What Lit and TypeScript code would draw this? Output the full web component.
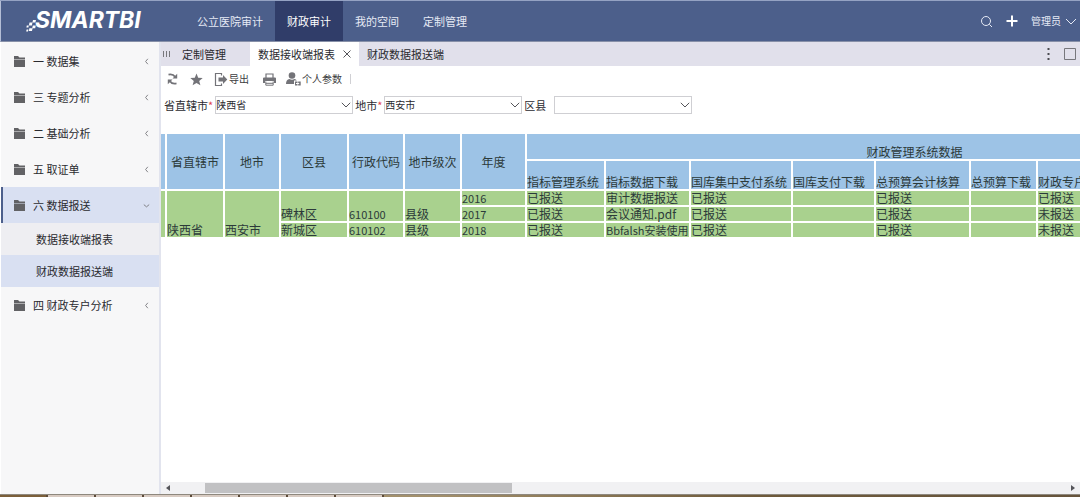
import { LitElement, html, css, svg, nothing } from "lit";
import { customElement, state } from "lit/decorators.js";
import { classMap } from "lit/directives/class-map.js";

const NAV = ["公立医院审计", "财政审计", "我的空间", "定制管理"];

const MENU: { label: string; children?: string[] }[] = [
  { label: "一 数据集" },
  { label: "三 专题分析" },
  { label: "二 基础分析" },
  { label: "五 取证单" },
  { label: "六 数据报送", children: ["数据接收端报表", "财政数据报送端"] },
  { label: "四 财政专户分析" },
];

const FILTERS = [
  { id: "province", label: "省直辖市", required: true, value: "陕西省" },
  { id: "city", label: "地市", required: true, value: "西安市" },
  { id: "district", label: "区县", required: false, value: "" },
];

const COLUMNS = [6, 58, 56, 68, 56, 57, 65, 79, 85, 102, 83, 95, 67, 266];
const KEYS = ["省直辖市", "地市", "区县", "行政代码", "地市级次", "年度"];
const SYSTEMS = ["指标管理系统", "指标数据下载", "国库集中支付系统", "国库支付下载", "总预算会计核算", "总预算下载", "财政专户"];

type Cell = { text: string; rows: number };
const c = (text: string, rows = 1): Cell => ({ text, rows });
const ROWS: Cell[][] = [
  [c("", 3), c("陕西省", 3), c("西安市", 3), c("碑林区", 2), c("610100", 2), c("县级", 2), c("2016"),
    c("已报送"), c("审计数据报送"), c("已报送"), c(""), c("已报送"), c(""), c("已报送")],
  [c("2017"), c("已报送"), c("会议通知.pdf"), c("已报送"), c(""), c("已报送"), c(""), c("未报送")],
  [c("新城区"), c("610102"), c("县级"), c("2018"),
    c("已报送"), c("Bbfalsh安装使用"), c("已报送"), c(""), c("已报送"), c(""), c("未报送")],
];

const chevron = (d: string, size = 10) => html`
  <svg class="chevron" width=${size} height=${size} viewBox="0 0 10 10" fill="none" stroke="currentColor" aria-hidden="true">
    ${svg`<path d=${d} />`}
  </svg>`;

@customElement("app-root")
export class AppRoot extends LitElement {
  @state() private nav = 1;
  @state() private open = 4;

  static styles = css`
    :host {
      display: flex;
      flex-direction: column;
      height: 100vh;
      box-sizing: border-box;
      overflow: hidden;
      border-top: 1px solid #94a2c3;
      background: #fff;
      color: #2a2a2f;
      font-family: "Noto Sans CJK SC", sans-serif;
      font-size: 11px;
      line-height: 16px;
    }
    * { box-sizing: border-box; }
    button {
      display: flex;
      align-items: center;
      margin: 0;
      padding: 0;
      border: 0;
      background: none;
      color: inherit;
      font: inherit;
      white-space: nowrap;
      cursor: pointer;
    }
    svg { display: block; flex: none; }

    .header {
      display: flex;
      flex: none;
      height: 41px;
      background: #4c5f8b;
      border-left: 1px solid #b4bed6;
      border-bottom: 1px solid #8790a8;
      color: #e6eaf5;
    }
    .brand {
      display: flex;
      align-items: center;
      width: 184px;
      padding-left: 25px;
      color: #fff;
    }
    .brand .mark { margin: 10px -2px 0 0; }
    .brand b {
      font: italic 700 23px/30px Inter, sans-serif;
      padding-bottom: 2px;
    }
    .nav { display: flex; flex: 1; }
    .nav button { padding: 0 12px; }
    .nav button.active { background: #303d69; color: #fff; }
    .user { display: flex; align-items: center; gap: 13px; padding-right: 4px; }
    .user .name { gap: 5px; font-size: 10px; }

    .body { display: flex; flex: 1; min-height: 0; }
    .side {
      flex: none;
      width: 161px;
      padding-top: 1px;
      background: #f7f7f8;
      border-left: 1px solid #fff;
      border-right: 2px solid #e2e4ee;
    }
    .item {
      width: 100%;
      height: 36px;
      padding: 0 8px 0 10px;
      gap: 7px;
      border-left: 2px solid transparent;
      text-align: left;
    }
    .item span { flex: 1; }
    .item .chevron { color: #77777c; }
    .item.open { background: #d9e0f2; border-left-color: #4c5f8b; }
    .sub { display: flex; flex-direction: column; background: #eeeef2; }
    .sub a {
      padding: 8px 0 8px 35px;
      color: inherit;
      text-decoration: none;
    }
    .sub a.current { background: #d9e0f2; }

    .main { display: flex; flex: 1; flex-direction: column; min-width: 0; }
    .tabs {
      display: flex;
      flex: none;
      height: 24px;
      background: #e1e0eb;
    }
    .grip { display: flex; align-items: center; width: 13px; padding-left: 2px; }
    .tabs .tab { padding: 0 8px; }
    .tabs .first { width: 76px; }
    .tabs .active { display: flex; align-items: center; width: 109px; background: #fff; }
    .tools { display: flex; align-items: center; gap: 14px; margin-left: auto; padding-right: 4px; }

    .toolbar {
      display: flex;
      align-items: center;
      flex: none;
      height: 26px;
      padding-left: 6px;
      color: #737378;
      font-size: 10px;
    }
    .toolbar button span { color: #3c3c40; }
    .toolbar .refresh { margin-right: 12px; }
    .toolbar .star { margin-right: 11px; }
    .toolbar .export { gap: 1px; margin-right: 14px; }
    .toolbar .print { margin-right: 10px; }
    .toolbar .params { gap: 1px; margin-right: 8px; }
    .divider { width: 1px; height: 10px; background: #d0d0d4; }

    .filters { display: flex; align-items: center; flex: none; gap: 2px; padding: 4px 3px 20px; }
    .filters label { white-space: nowrap; }
    .filters i { color: #e2444c; font-style: normal; }
    .filters .plain { margin-right: 6px; }
    .pick { display: grid; align-items: center; width: 138px; }
    .pick select, .pick .chevron { grid-area: 1 / 1; }
    .pick .chevron { justify-self: end; margin-right: 2px; color: #55555a; pointer-events: none; }
    select {
      appearance: none;
      width: 100%;
      height: 18px;
      padding: 0 14px 0 0;
      border: 1px solid #cfcfd3;
      border-radius: 0;
      background: #fff;
      color: inherit;
      font: inherit;
      font-size: 10px;
    }

    .sheet { flex: 1; min-height: 0; overflow: hidden; }
    table {
      table-layout: fixed;
      width: 1px;
      border-collapse: separate;
      border-spacing: 0;
      color: #2c3a3a;
      font-size: 12px;
      line-height: 14px;
    }
    th, td {
      height: 16px;
      padding: 0;
      border: solid #fff;
      border-width: 0 2px 2px 0;
      vertical-align: bottom;
      text-align: left;
      font-weight: 400;
      white-space: nowrap;
    }
    th { background: #9dc3e6; }
    td { background: #a9d18e; }
    td.latin { font-size: 11px; }
    .group th { height: 27px; text-align: center; }
    .group th.key { vertical-align: middle; }
    .names th { height: 30px; }

    .scroll {
      display: flex;
      align-items: center;
      flex: none;
      height: 12px;
      background: #f1f1f3;
      color: #55555a;
    }
    .scroll button { width: 14px; justify-content: center; }
    .track { flex: 1; height: 10px; }
    .thumb { width: 34.4%; height: 100%; margin-left: 3.4%; background: #c1c1c3; }

    .taskbar {
      display: flex;
      flex: none;
      height: 3px;
      border-top: 1px solid #8e887e;
      background: linear-gradient(90deg, #a3906c 40%, #6e5a3b 70%, #66543c);
    }
    .taskbar i { width: 48px; border-right: 2px solid #5c4a38; background: #d8cbc2; }
    .taskbar i:first-child { background: #7b5f3a; }
  `;

  private renderMenu() {
    return MENU.map((m, i) => {
      const open = this.open === i && !!m.children;
      return html`
        <button class=${classMap({ item: true, open })} aria-expanded=${open} @click=${() => (this.open = open ? -1 : i)}>
          <svg width="13" height="11" viewBox="0 0 13 11" fill="#626265" aria-hidden="true">
            <path d="M1 0h4l1.5 1.5H12V3H1zM1 3.6h11V11H1z" />
          </svg>
          <span>${m.label}</span>
          ${open ? chevron("M2 4l3 2.5L8 4", 9) : chevron("M6.5 2L4 5l2.5 3", 9)}
        </button>
        ${open
          ? html`<div class="sub">
              ${m.children!.map((s, k) => html`<a href="#" class=${classMap({ current: k === 1 })}>${s}</a>`)}
            </div>`
          : nothing}
      `;
    });
  }

  private renderTable() {
    return html`
      <table>
        <colgroup>${COLUMNS.map((w) => html`<col width=${w} />`)}</colgroup>
        <thead>
          <tr class="group">
            <th rowspan="2"></th>
            ${KEYS.map((k) => html`<th class="key" rowspan="2">${k}</th>`)}
            <th colspan=${SYSTEMS.length}>财政管理系统数据</th>
          </tr>
          <tr class="names">${SYSTEMS.map((s) => html`<th>${s}</th>`)}</tr>
        </thead>
        <tbody>
          ${ROWS.map((r) => html`<tr>${r.map((x) => html`<td class=${classMap({ latin: /^\w/.test(x.text) })} rowspan=${x.rows}>${x.text}</td>`)}</tr>`)}
        </tbody>
      </table>
    `;
  }

  render() {
    return html`
      <header class="header">
        <div class="brand">
          <svg class="mark" width="11" height="12" viewBox="0 0 11 12" fill="#fff" aria-hidden="true">
            <path d="M7 0h3l-.6 2.600h-3zM3.500 2.600h3l-.6 2.800h-3zM6.800 5.400h3l-.6 2.800h-3zM.8 5.400h2l-.4 2h-2zM3.400 8.200h3.200l-.6 2.800h-3.200zM.6 9.600h1.800l-.4 1.800h-1.800z" />
          </svg>
          <b>SMARTBI</b>
        </div>
        <nav class="nav">
          ${NAV.map((n, i) => html`<button class=${classMap({ active: i === this.nav })} @click=${() => (this.nav = i)}>${n}</button>`)}
        </nav>
        <div class="user">
          <button aria-label="搜索">
            <svg width="13" height="13" viewBox="0 0 13 13" fill="none" stroke="currentColor">
              <circle cx="6" cy="6" r="4.500" /><path d="M9.300 9.300L12 12" />
            </svg>
          </button>
          <button aria-label="新建">
            <svg width="12" height="12" viewBox="0 0 12 12" stroke="#fff" stroke-width="2"><path d="M6 .5v11M.5 6h11" /></svg>
          </button>
          <button class="name">管理员 ${chevron("M0 3l5 5 5-5", 10)}</button>
        </div>
      </header>
      <div class="body">
        <nav class="side">${this.renderMenu()}</nav>
        <main class="main">
          <div class="tabs">
            <div class="grip">
              <svg width="7" height="6" viewBox="0 0 7 6" stroke="#77777c"><path d="M.5 0v6M3.500 0v6M6.500 0v6" /></svg>
            </div>
            <button class="tab first">定制管理</button>
            <div class="active">
              <button class="tab">数据接收端报表</button>
              <button aria-label="关闭">
                <svg width="8" height="8" viewBox="0 0 8 8" stroke="#55555a"><path d="M.5 .5l7 7M7.500 .5l-7 7" /></svg>
              </button>
            </div>
            <button class="tab">财政数据报送端</button>
            <div class="tools">
              <button aria-label="更多">
                <svg width="3" height="12" viewBox="0 0 3 12" fill="#4a4a50"><path d="M.5 0h2v2h-2zM.5 5h2v2h-2zM.5 10h2v2h-2z" /></svg>
              </button>
              <button aria-label="最大化">
                <svg width="12" height="12" viewBox="0 0 12 12" fill="none" stroke="#77777c"><path d="M.5 .5h11v11H.5z" /></svg>
              </button>
            </div>
          </div>
          <div class="toolbar">
            <button class="refresh" aria-label="刷新">
              <svg width="11" height="12" viewBox="0 0 11 12" fill="none" stroke="currentColor" stroke-width="1.800">
                <path d="M1.500 1.600Q6 .6 8 3.800M9.500 10.400Q5 11.400 3 8.200" />
                <path d="M10.200 .8v4.700H5.500zM.8 11.200V6.500h4.700z" fill="currentColor" stroke="none" />
              </svg>
            </button>
            <button class="star" aria-label="收藏">
              <svg width="13" height="13" viewBox="0 0 13 13" fill="currentColor">
                <path d="M6.500 .5l1.700 4.200 4.500.3-3.500 2.900 1.200 4.400-3.900-2.400-3.900 2.400 1.200-4.400L.3 5l4.500-.3z" />
              </svg>
            </button>
            <button class="export">
              <svg width="14" height="13" viewBox="0 0 14 13" fill="none" stroke="currentColor">
                <path d="M7.500 2.500v-2h-6v12h6v-2" stroke-width="1.200" />
                <path d="M4.500 4.500H9V2l4.300 4.500L9 11V8.500H4.500z" fill="currentColor" stroke="none" />
              </svg>
              <span>导出</span>
            </button>
            <button class="print" aria-label="打印">
              <svg width="13" height="13" viewBox="0 0 13 13" fill="none" stroke="currentColor">
                <path d="M3 5V1h7v4" stroke-width="1.200" />
                <path d="M0 5.500Q0 4.500 1 4.500h11q1 0 1 1V10h-2V8H2v2H0z" fill="currentColor" stroke="none" />
                <path d="M2.800 8.500v3.700h7.400V8.500M3 10.300h7" />
              </svg>
            </button>
            <button class="params">
              <svg width="15" height="14" viewBox="0 0 15 14" fill="currentColor">
                <circle cx="6" cy="3.500" r="3.300" />
                <path d="M0 12q0-4.500 3.500-5 2.500 1.300 5 0 1.500.3 2.300 1.500H8V12z" />
                <path d="M9 9.500h2.500V11H10v1h1.500v1.500H9zM12.200 9.500h2.500v4h-2.500V12h1v-1h-1z" />
              </svg>
              <span>个人参数</span>
            </button>
            <div class="divider"></div>
          </div>
          <form class="filters">
            ${FILTERS.map((f) => html`
              <label for=${f.id} class=${classMap({ plain: !f.required })}>${f.label}${f.required ? html`<i>*</i>` : nothing}</label>
              <div class="pick">
                <select id=${f.id}><option>${f.value}</option></select>
                ${chevron("M.8 2.800L5 7l4.200-4.200", 10)}
              </div>`)}
          </form>
          <div class="sheet">${this.renderTable()}</div>
          <div class="scroll">
            <button aria-label="向左"><svg width="4" height="6" viewBox="0 0 4 6" fill="currentColor"><path d="M4 0v6L0 3z" /></svg></button>
            <div class="track"><div class="thumb"></div></div>
            <button aria-label="向右"><svg width="4" height="6" viewBox="0 0 4 6" fill="currentColor"><path d="M0 0v6l4-3z" /></svg></button>
          </div>
        </main>
      </div>
      <div class="taskbar">${Array.from({ length: 8 }, () => html`<i></i>`)}</div>
    `;
  }
}
